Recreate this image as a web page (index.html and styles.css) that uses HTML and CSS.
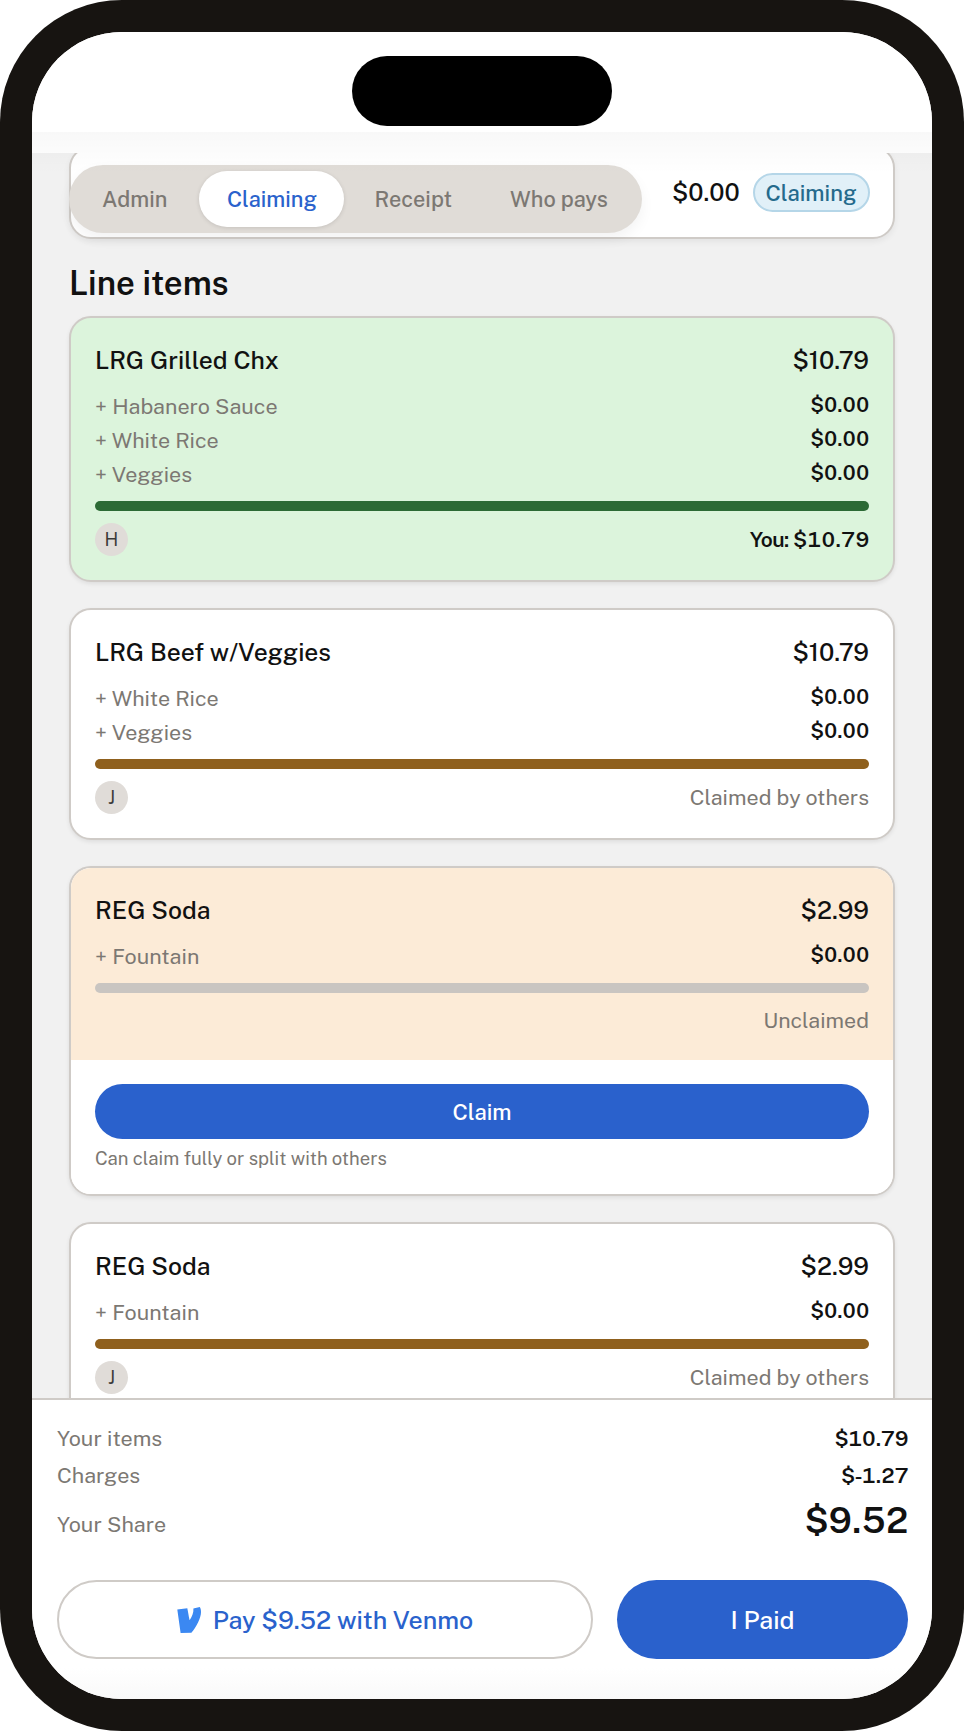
FILE: index.html
```html
<!DOCTYPE html>
<html lang="en">
<head>
<meta charset="utf-8">
<title>Claiming</title>
<link rel="stylesheet" href="styles.css">
</head>
<body>
<div class="phone">
  <div class="screen">
    <div class="island"></div>
    <div class="fade"></div>
    <div class="status"></div>
    <main class="scroll">
      <section class="topcard">
        <nav class="tabs">
          <span class="tab tab-admin">Admin</span>
          <span class="tab tab-active">Claiming</span>
          <span class="tab tab-receipt">Receipt</span>
          <span class="tab tab-who">Who pays</span>
        </nav>
        <div class="topright">
          <span class="topamount">$0.00</span>
          <span class="badge">Claiming</span>
        </div>
      </section>
      <h2 class="heading">Line items</h2>

      <article class="card card-green">
        <div class="body">
          <div class="row title"><span>LRG Grilled Chx</span><span>$10.79</span></div>
          <div class="mods">
            <div class="row mod"><span>+ Habanero Sauce</span><b>$0.00</b></div>
            <div class="row mod"><span>+ White Rice</span><b>$0.00</b></div>
            <div class="row mod"><span>+ Veggies</span><b>$0.00</b></div>
          </div>
          <div class="bar bar-green"></div>
          <div class="row foot"><span class="avatar">H</span><span class="you">You: $10.79</span></div>
        </div>
      </article>

      <article class="card">
        <div class="body">
          <div class="row title"><span>LRG Beef w/Veggies</span><span>$10.79</span></div>
          <div class="mods">
            <div class="row mod"><span>+ White Rice</span><b>$0.00</b></div>
            <div class="row mod"><span>+ Veggies</span><b>$0.00</b></div>
          </div>
          <div class="bar bar-brown"></div>
          <div class="row foot"><span class="avatar">J</span><span class="note">Claimed by others</span></div>
        </div>
      </article>

      <article class="card">
        <div class="body body-orange">
          <div class="row title"><span>REG Soda</span><span>$2.99</span></div>
          <div class="mods">
            <div class="row mod"><span>+ Fountain</span><b>$0.00</b></div>
          </div>
          <div class="bar bar-grey"></div>
          <div class="row foot foot-right"><span class="note">Unclaimed</span></div>
        </div>
        <div class="claim">
          <button class="claim-btn">Claim</button>
          <p class="hint">Can claim fully or split with others</p>
        </div>
      </article>

      <article class="card">
        <div class="body">
          <div class="row title"><span>REG Soda</span><span>$2.99</span></div>
          <div class="mods">
            <div class="row mod"><span>+ Fountain</span><b>$0.00</b></div>
          </div>
          <div class="bar bar-brown"></div>
          <div class="row foot"><span class="avatar">J</span><span class="note">Claimed by others</span></div>
        </div>
      </article>
    </main>
    <footer class="summary">
      <div class="row line"><span>Your items</span><b>$10.79</b></div>
      <div class="row line"><span>Charges</span><b>$-1.27</b></div>
      <div class="row line line-total"><span>Your Share</span><b>$9.52</b></div>
      <div class="actions">
        <button class="btn-venmo">
          <svg class="venmo" viewBox="0 0 24 26" aria-hidden="true"><path d="M0.3 2.6 10.3 1.2C11 4.2 11.5 8.3 12.6 13.2 15 9.4 16.8 5.2 16.4 1.4L22.8 0C23.8 1.6 24 3.4 24 5.2 24 10.8 19.3 20 14.4 25.8L3.6 26Z"/></svg>
          <span>Pay $9.52 with Venmo</span>
        </button>
        <button class="btn-paid">I Paid</button>
      </div>
    </footer>
  </div>
</div>
</body>
</html>
```
FILE: styles.css
```css
* { box-sizing: border-box; }
html, body { margin: 0; padding: 0; background: #fff; }
body { font-family: "Public Sans", Inter, "Liberation Sans", sans-serif; color: #111; }

.phone {
  width: 964px;
  height: 1731px;
  padding: 32px;
  background: #171411;
  border-radius: 122px;
}
.screen {
  position: relative;
  width: 900px;
  height: 1667px;
  background: #fff;
  border-radius: 90px;
  overflow: hidden;
  display: flex;
  flex-direction: column;
}
.island {
  position: absolute;
  left: 320px;
  top: 24px;
  width: 260px;
  height: 70px;
  border-radius: 35px;
  background: #000;
  z-index: 3;
}
.fade {
  position: absolute;
  left: 0;
  right: 0;
  top: 100px;
  height: 42px;
  background: linear-gradient(rgba(0,0,0,.028), rgba(0,0,0,0));
  z-index: 2;
  pointer-events: none;
}
.status { height: 121px; flex: none; background: #fff; }

.scroll {
  flex: 1;
  min-height: 0;
  overflow: hidden;
  background: #f1f1f1;
  padding: 0 37px;
}

.topcard {
  margin-top: -7px;
  height: 93px;
  display: flex;
  align-items: flex-start;
  background: #fff;
  border: 2px solid #cfcbc7;
  border-radius: 22px;
  box-shadow: 0 3px 6px rgba(0,0,0,.06);
}
.tabs {
  margin: 17px 0 0 -2px;
  flex: none;
  width: 573px;
  height: 68px;
  border-radius: 34px;
  background: #e0dcd7;
  display: flex;
  align-items: center;
  box-shadow: 0 6px 14px rgba(0,0,0,.05);
}
.tab { font-size: 21.7px; font-weight: 500; color: #7c7873; }
.tab-admin { margin-left: 33px; }
.tab-active {
  margin-left: 32px;
  flex: none;
  width: 145px;
  height: 56px;
  border-radius: 28px;
  background: #fff;
  color: #2a62cc;
  display: flex;
  align-items: center;
  justify-content: center;
  box-shadow: 0 1px 4px rgba(0,0,0,.12);
}
.tab-receipt { margin-left: 30px; }
.tab-who { margin-left: 58px; }

.topright { margin: 25px 0 0 30px; display: flex; align-items: center; gap: 13px; }
.topamount { font-size: 24.5px; font-weight: 500; }
.badge {
  width: 117px;
  height: 39px;
  border-radius: 20px;
  background: #e1f0f8;
  border: 2px solid #b5d6e8;
  color: #256a8c;
  font-size: 22px;
  font-weight: 500;
  display: flex;
  align-items: center;
  justify-content: center;
}

.heading { margin: 23px 0 0; height: 54px; font-size: 33px; line-height: 42px; font-weight: 600; }

.card {
  background: #fff;
  border: 2px solid #cfcbc7;
  border-radius: 22px;
  overflow: hidden;
  margin-bottom: 26px;
  box-shadow: 0 2px 4px rgba(0,0,0,.08);
}
.card-green { background: #dcf4dc; }
.body { padding: 24px 24px 24px; }
.body-orange { background: #fcebd7; padding-bottom: 23px; }

.row { display: flex; justify-content: space-between; align-items: center; }
.title { font-size: 24.7px; font-weight: 500; line-height: 38px; }
.mods { margin-top: 9px; }
.mod { height: 34px; font-size: 21.5px; color: #7c7873; }
.mod b {
  font-size: 20.5px;
  font-weight: 600;
  color: #111;
  font-variant-numeric: tabular-nums;
  letter-spacing: -.9px;
  margin-top: -2px;
}

.bar { height: 10px; border-radius: 5px; margin-top: 10px; }
.bar-green { background: #2c6a35; }
.bar-brown { background: #8f601d; }
.bar-grey { background: #c9c5c1; }

.foot { margin-top: 12px; height: 33px; }
.foot-right { justify-content: flex-end; margin-top: 10px; height: 34px; }
.avatar {
  width: 33px;
  height: 33px;
  border-radius: 50%;
  background: #e0dcd8;
  color: #3b3a38;
  font-size: 18px;
  display: flex;
  align-items: center;
  justify-content: center;
}
.you { font-size: 21px; font-weight: 600; font-variant-numeric: tabular-nums; letter-spacing: -.6px; }
.note { font-size: 21.4px; color: #7c7873; }

.claim { padding: 24px 24px 24px; background: #fff; }
.claim-btn {
  display: block;
  width: 100%;
  height: 55px;
  border: 0;
  border-radius: 28px;
  background: #2a61cc;
  color: #fff;
  font: 500 22px "Public Sans", Inter, "Liberation Sans", sans-serif;
}
.hint { margin: 7px 0 0; font-size: 18.5px; line-height: 24px; color: #7c7873; }

.summary {
  flex: none;
  height: 301px;
  background: linear-gradient(#fff 268px, #f9f9f9);
  border-top: 2px solid #cfcbc7;
  padding: 20px 24px 0 25px;
}
.line { height: 37px; font-size: 21.5px; color: #7c7873; }
.line b {
  color: #111;
  font-weight: 600;
  font-size: 21px;
  font-variant-numeric: tabular-nums;
  letter-spacing: -1px;
}
.line-total { height: 60px; }
.line-total b { font-size: 36px; line-height: 50px; margin-top: -8px; letter-spacing: -1.5px; }

.actions { display: flex; gap: 24px; margin-top: 26px; }
.btn-venmo, .btn-paid {
  height: 79px;
  border-radius: 40px;
  padding-top: 1px;
  font: 500 25px "Public Sans", Inter, "Liberation Sans", sans-serif;
  display: flex;
  align-items: center;
  justify-content: center;
}
.btn-venmo {
  width: 536px;
  gap: 12px;
  background: #fff;
  border: 2px solid #cfcbc7;
  color: #2a62cc;
}
.btn-paid { width: 291px; border: 0; background: #2a61cc; color: #fff; }
.venmo { width: 24px; height: 26px; fill: #3b88f2; }
```
